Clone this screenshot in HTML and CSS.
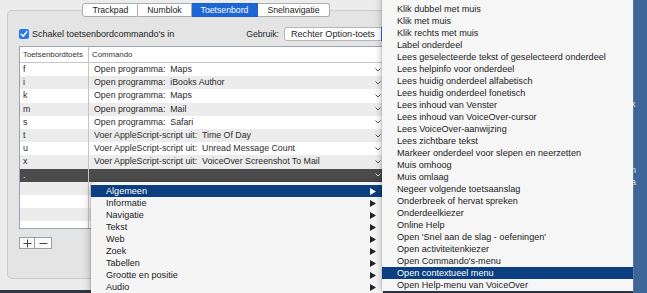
FILE: index.html
```html
<!DOCTYPE html>
<html lang="nl">

<head>
    <meta charset="UTF-8">
    <meta name="viewport" content="width=device-width, initial-scale=1.0">
    <title>VoiceOver-hulpprogramma - Toetsenbord</title>
    <link rel="stylesheet" href="styles.css">
</head>

<body>
    <div class="screen">
        <div class="window">
            <div class="tabs">
                <span class="tab">Trackpad</span>
                <span class="tab">Numblok</span>
                <span class="tab active">Toetsenbord</span>
                <span class="tab">Snelnavigatie</span>
            </div>

            <div class="group">
                <div class="options">
                    <label class="check">
                        <span class="box">
                            <svg width="8" height="8" viewBox="0 0 8 8"><polyline points="1.3,4.2 3.2,6.2 6.8,1.6" fill="none" stroke="#fff" stroke-width="1.5" stroke-linecap="round" stroke-linejoin="round"/></svg>
                        </span>
                        Schakel toetsenbordcommando's in
                    </label>
                    <div class="use">
                        <span>Gebruik:</span>
                        <span class="popup">
                            <span class="popup-label">Rechter Option-toets</span>
                            <span class="popup-arrows"></span>
                        </span>
                    </div>
                </div>

                <div class="table">
                    <div class="thead">
                        <div class="k">Toetsenbordtoets</div>
                        <div class="c">Commando</div>
                    </div>
                    <div class="tbody">
                        <div class="row"><div class="k">f</div><div class="c"><span>Open programma:&nbsp; Maps</span><svg class="chev" width="6" height="4" viewBox="0 0 6 4"><polyline points="0.5,0.5 3,3 5.5,0.5"/></svg></div></div>
                        <div class="row"><div class="k">i</div><div class="c"><span>Open programma:&nbsp; iBooks Author</span><svg class="chev" width="6" height="4" viewBox="0 0 6 4"><polyline points="0.5,0.5 3,3 5.5,0.5"/></svg></div></div>
                        <div class="row"><div class="k">k</div><div class="c"><span>Open programma:&nbsp; Maps</span><svg class="chev" width="6" height="4" viewBox="0 0 6 4"><polyline points="0.5,0.5 3,3 5.5,0.5"/></svg></div></div>
                        <div class="row"><div class="k">m</div><div class="c"><span>Open programma:&nbsp; Mail</span><svg class="chev" width="6" height="4" viewBox="0 0 6 4"><polyline points="0.5,0.5 3,3 5.5,0.5"/></svg></div></div>
                        <div class="row"><div class="k">s</div><div class="c"><span>Open programma:&nbsp; Safari</span><svg class="chev" width="6" height="4" viewBox="0 0 6 4"><polyline points="0.5,0.5 3,3 5.5,0.5"/></svg></div></div>
                        <div class="row"><div class="k">t</div><div class="c"><span>Voer AppleScript-script uit:&nbsp; Time Of Day</span><svg class="chev" width="6" height="4" viewBox="0 0 6 4"><polyline points="0.5,0.5 3,3 5.5,0.5"/></svg></div></div>
                        <div class="row"><div class="k">u</div><div class="c"><span>Voer AppleScript-script uit:&nbsp; Unread Message Count</span><svg class="chev" width="6" height="4" viewBox="0 0 6 4"><polyline points="0.5,0.5 3,3 5.5,0.5"/></svg></div></div>
                        <div class="row"><div class="k">x</div><div class="c"><span>Voer AppleScript-script uit:&nbsp; VoiceOver Screenshot To Mail</span><svg class="chev" width="6" height="4" viewBox="0 0 6 4"><polyline points="0.5,0.5 3,3 5.5,0.5"/></svg></div></div>
                        <div class="row sel"><div class="k">.</div><div class="c"><span></span><svg class="chev" width="6" height="4" viewBox="0 0 6 4"><polyline points="0.5,0.5 3,3 5.5,0.5"/></svg></div></div>
                        <div class="row"><div class="k"></div><div class="c"></div></div>
                        <div class="row"><div class="k"></div><div class="c"></div></div>
                        <div class="row"><div class="k"></div><div class="c"></div></div>
                        <div class="row"><div class="k"></div><div class="c"></div></div>
                    </div>
                </div>

                <div class="plusmin">
                    <span class="pm"><svg width="9" height="9" viewBox="0 0 9 9"><path d="M4.5 0.5v8M0.5 4.5h8"/></svg></span>
                    <span class="pm"><svg width="9" height="9" viewBox="0 0 9 9"><path d="M0.5 4.5h8"/></svg></span>
                </div>
            </div>
        </div>

        <div class="desktop">
            <span class="frag">x</span>
            <span class="frag gap">n</span>
            <span class="frag">a</span>
        </div>

        <!-- categorie menu -->
        <div class="menu menu-cat">
            <div class="item hl"><span>Algemeen</span><svg class="tri" width="6" height="7" viewBox="0 0 6 7"><polygon points="0,0 6,3.5 0,7"/></svg></div>
            <div class="item"><span>Informatie</span><svg class="tri" width="6" height="7" viewBox="0 0 6 7"><polygon points="0,0 6,3.5 0,7"/></svg></div>
            <div class="item"><span>Navigatie</span><svg class="tri" width="6" height="7" viewBox="0 0 6 7"><polygon points="0,0 6,3.5 0,7"/></svg></div>
            <div class="item"><span>Tekst</span><svg class="tri" width="6" height="7" viewBox="0 0 6 7"><polygon points="0,0 6,3.5 0,7"/></svg></div>
            <div class="item"><span>Web</span><svg class="tri" width="6" height="7" viewBox="0 0 6 7"><polygon points="0,0 6,3.5 0,7"/></svg></div>
            <div class="item"><span>Zoek</span><svg class="tri" width="6" height="7" viewBox="0 0 6 7"><polygon points="0,0 6,3.5 0,7"/></svg></div>
            <div class="item"><span>Tabellen</span><svg class="tri" width="6" height="7" viewBox="0 0 6 7"><polygon points="0,0 6,3.5 0,7"/></svg></div>
            <div class="item"><span>Grootte en positie</span><svg class="tri" width="6" height="7" viewBox="0 0 6 7"><polygon points="0,0 6,3.5 0,7"/></svg></div>
            <div class="item"><span>Audio</span><svg class="tri" width="6" height="7" viewBox="0 0 6 7"><polygon points="0,0 6,3.5 0,7"/></svg></div>
        </div>

        <!-- commando menu -->
        <div class="menu menu-cmd">
            <div class="item">Ga naar rechts</div>
            <div class="item">Klik dubbel met muis</div>
            <div class="item">Klik met muis</div>
            <div class="item">Klik rechts met muis</div>
            <div class="item">Label onderdeel</div>
            <div class="item">Lees geselecteerde tekst of geselecteerd onderdeel</div>
            <div class="item">Lees helpinfo voor onderdeel</div>
            <div class="item">Lees huidig onderdeel alfabetisch</div>
            <div class="item">Lees huidig onderdeel fonetisch</div>
            <div class="item">Lees inhoud van Venster</div>
            <div class="item">Lees inhoud van VoiceOver-cursor</div>
            <div class="item">Lees VoiceOver-aanwijzing</div>
            <div class="item">Lees zichtbare tekst</div>
            <div class="item">Markeer onderdeel voor slepen en neerzetten</div>
            <div class="item">Muis omhoog</div>
            <div class="item">Muis omlaag</div>
            <div class="item">Negeer volgende toetsaanslag</div>
            <div class="item">Onderbreek of hervat spreken</div>
            <div class="item">Onderdeelkiezer</div>
            <div class="item">Online Help</div>
            <div class="item">Open 'Snel aan de slag - oefeningen'</div>
            <div class="item">Open activiteitenkiezer</div>
            <div class="item">Open Commando's-menu</div>
            <div class="item hl">Open contextueel menu</div>
            <div class="item">Open Help-menu van VoiceOver</div>
        </div>
    </div>
</body>

</html>
```

FILE: styles.css
```css
* {
    box-sizing: border-box;
}

body {
    margin: 0;
    width: 647px;
    height: 293px;
    overflow: hidden;
    font-family: "Liberation Sans", Arial, sans-serif;
    color: #262626;
    background: #3f6699;
}

.screen {
    position: relative;
    display: flex;
    width: 647px;
    height: 293px;
}

.window {
    flex: 0 0 633px;
    height: 293px;
    padding-top: 3px;
    background: #ececec;
    border-bottom: 3px solid #2e3846;
}

/* segmented tabs */
.tabs {
    position: relative;
    z-index: 1;
    display: flex;
    justify-content: center;
    width: 412px;
    height: 14px;
    margin-bottom: -7px;
}

.tab {
    height: 14px;
    padding: 0 9px;
    font-size: 8.7px;
    line-height: 12px;
    color: #222;
    background: #fff;
    border: 1px solid #adadad;
    border-left: none;
}

.tab:first-child {
    border-left: 1px solid #adadad;
    border-radius: 3px 0 0 3px;
}

.tab:last-child {
    border-radius: 0 3px 3px 0;
}

.tab.active {
    background: #1c66d8;
    border-color: #1c5fc8;
    color: #fff;
}

/* group box */
.group {
    width: 398px;
    height: 269px;
    margin: 0 7px;
    padding: 16px 11px 0;
    background: #e4e4e4;
    border: 1px solid #cbcbcb;
    border-radius: 5px;
}

.options {
    display: flex;
    justify-content: space-between;
    align-items: center;
    height: 14px;
}

.check {
    display: flex;
    align-items: center;
    gap: 3px;
    font-size: 9px;
    color: #222;
}

.box {
    display: flex;
    align-items: center;
    justify-content: center;
    width: 10px;
    height: 10px;
    background: #2a78ef;
    border-radius: 2px;
}

.use {
    display: flex;
    align-items: center;
    gap: 5px;
    font-size: 8.7px;
}

.popup {
    display: flex;
    justify-content: space-between;
    width: 109px;
    height: 14px;
    background: #fff;
    border: 1px solid #b6b6b6;
    border-radius: 3px;
    font-size: 9.1px;
    line-height: 12px;
}

.popup-label {
    padding-left: 6px;
}

.popup-arrows {
    width: 12px;
    margin: -1px -1px -1px 0;
    background: #2a78ef;
    border-radius: 0 3px 3px 0;
}

/* table */
.table {
    display: flex;
    flex-direction: column;
    height: 183px;
    margin-top: 5px;
    background: #fff;
    border: 1px solid #98a3b3;
}

.thead {
    display: flex;
    height: 16px;
    font-size: 7.8px;
    line-height: 15px;
    color: #333;
    border-bottom: 1px solid #c6c6c6;
}

.k {
    width: 69px;
    padding-left: 3px;
    border-right: 1px solid #c4c4c4;
}

.thead .c {
    padding-left: 3px;
}

.tbody {
    flex: 1;
    overflow: hidden;
}

.row {
    display: flex;
    height: 13.2px;
    font-size: 8.8px;
    line-height: 13.2px;
    color: #2a2a2a;
}

.row:nth-child(even) {
    background: #ececec;
}

.row.sel {
    background: #4b4b4b;
    color: #fff;
}

.row .c {
    display: flex;
    flex: 1;
    justify-content: space-between;
    align-items: center;
    padding: 0 11px 0 5px;
}

.chev polyline {
    fill: none;
    stroke: #555;
    stroke-width: 1;
}

.row.sel .chev polyline {
    stroke: #ddd;
}

.plusmin {
    display: flex;
    margin-top: 8px;
}

.pm {
    display: flex;
    align-items: center;
    justify-content: center;
    width: 16px;
    height: 12px;
    background: #fbfbfb;
    border: 1px solid #9f9f9f;
}

.pm + .pm {
    width: 17px;
    border-left: none;
}

.pm path {
    stroke: #444;
    stroke-width: 1;
}

/* desktop behind */
.desktop {
    flex: 1;
    padding-top: 98px;
    font-size: 9px;
    line-height: 12px;
    color: #e6ecf4;
    border-left: 1px solid #5a7fb0;
}

.frag {
    display: block;
    margin-left: -3px;
}

.frag.gap {
    margin-top: 54px;
}

/* menus */
.menu {
    position: absolute;
    z-index: 5;
    font-size: 9.1px;
    color: #222;
    background: #f5f5f5;
}

.menu-cat {
    left: 91px;
    top: 182px;
    width: 292px;
    padding-top: 3px;
    border-radius: 4px 0 0 0;
    box-shadow: 0 0 0 1px rgba(0, 0, 0, 0.1), 0 3px 10px rgba(0, 0, 0, 0.3);
}

.menu-cmd {
    z-index: 6;
    left: 382px;
    top: -8.7px;
    width: 251px;
    background: #f6f6f6;
    box-shadow: -1px 0 0 rgba(0, 0, 0, 0.08), -2px 0 6px rgba(0, 0, 0, 0.18);
}

.item {
    display: flex;
    justify-content: space-between;
    align-items: center;
    height: 12px;
    line-height: 12px;
    padding: 0 7px 0 15px;
    white-space: nowrap;
}

.item.hl {
    background: #0b3f80;
    color: #fff;
}

.tri polygon {
    fill: #222;
}

.item.hl .tri polygon {
    fill: #fff;
}
```
